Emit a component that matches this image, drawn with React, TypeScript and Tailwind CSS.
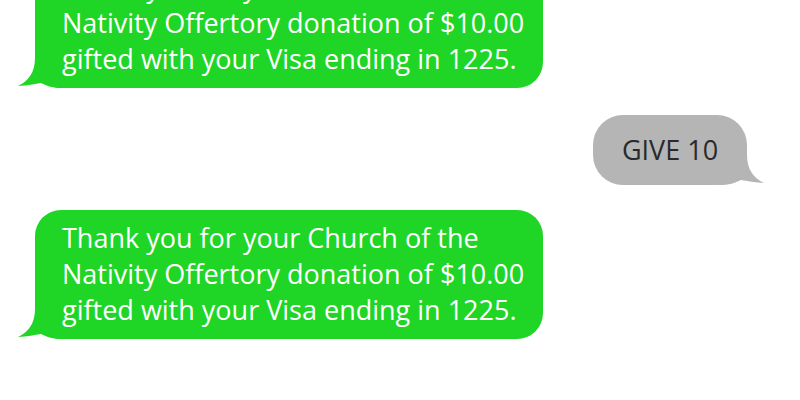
import React from 'react';

const GREEN = '#1fd526';

const MESSAGE =
  'Thank you for your Church of the Nativity Offertory donation of $10.00 gifted with your Visa ending in 1225.';

function GreenBubble({ className = '' }: { className?: string }) {
  return (
    <div className={`relative ml-[35px] w-[508px] ${className}`}>
      {/* tail, bottom left */}
      <svg className="absolute left-[-20px] bottom-0" width="50" height="40" viewBox="0 0 50 40">
        <path d="M20 0 L20 10 C20 25 13 33 3 38 C12 37.5 20 36 26 35 C32 38 38 40 48 40 L48 0 Z" fill={GREEN} />
      </svg>
      <div className="relative whitespace-nowrap rounded-[26px] bg-[#1fd526] pl-[27px] pr-[16px] pt-[10px] pb-[11px] text-[27px] leading-[36px] text-white">
        Thank you for your Church of the
        <br />
        Nativity Offertory donation of $10.00
        <br />
        gifted with your Visa ending in 1225.
      </div>
    </div>
  );
}

function GrayBubble() {
  return (
    <div className="relative mr-[53px] mt-[27px] self-end">
      {/* tail, bottom right */}
      <svg className="absolute right-[-20px] bottom-0" width="50" height="40" viewBox="0 0 50 40">
        <path d="M30 0 L30 10 C30 25 37 33 47 38 C38 37.5 30 36 24 35 C18 38 12 40 2 40 L2 0 Z" fill="#b5b5b5" />
      </svg>
      <div className="relative flex h-[70px] w-[154px] items-center justify-center rounded-[30px] bg-[#b5b5b5] text-[27px] text-[#2a2a2a]">
        GIVE 10
      </div>
    </div>
  );
}

export default function App() {
  return (
    <div
      className="flex h-[400px] w-[800px] flex-col overflow-hidden bg-white"
      style={{ fontFamily: '"Open Sans", "Noto Sans", sans-serif' }}
      aria-label={MESSAGE}
    >
      <GreenBubble className="mt-[-41px]" />
      <GrayBubble />
      <GreenBubble className="mt-[25px]" />
    </div>
  );
}
